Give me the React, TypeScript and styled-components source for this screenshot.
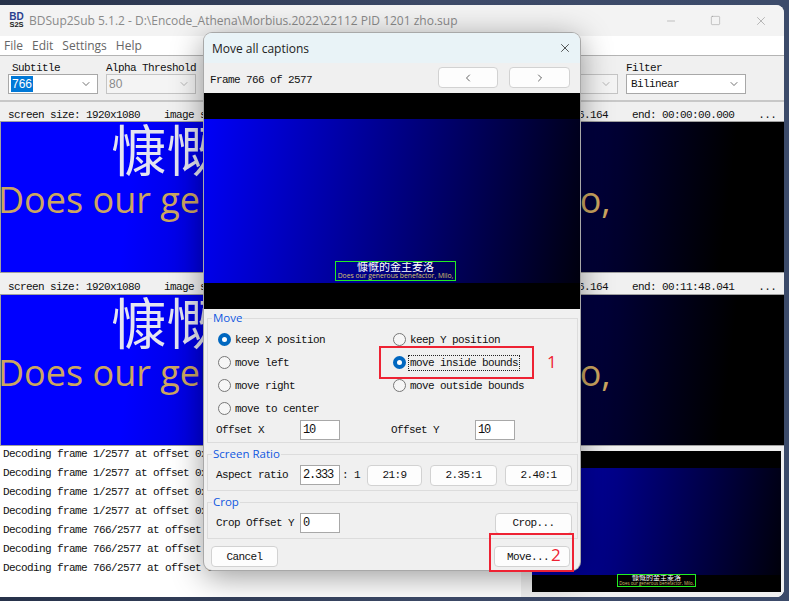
import React from "react";
import styled, { createGlobalStyle } from "styled-components";
import { ChevronDown, ChevronLeft, ChevronRight, X, Minus, Square } from "lucide-react";

const Global = createGlobalStyle`
  html, body { margin: 0; padding: 0; width: 789px; height: 601px; overflow: hidden; }
  * { box-sizing: border-box; }
`;

const MONO = `"Liberation Mono", monospace`;
const UI = `"Open Sans", "Noto Sans", sans-serif`;

const Desktop = styled.div`
  position: relative;
  width: 789px;
  height: 601px;
  padding: 5px 5px 4px 0;
  display: flex;
  background: linear-gradient(90deg, #27324a 0%, #3d4a68 55%, #3c4b6a 100%);
`;
const MainWindow = styled.div`
  flex: 1;
  display: flex;
  flex-direction: column;
  background: #f0f0f0;
  border-radius: 0 8px 8px 0;
  overflow: hidden;
`;
const TitleBar = styled.div`
  height: 31px;
  display: flex;
  align-items: center;
  padding: 0 0 0 8px;
  background: #f3f3f3;
  color: #8a8a8a;
  font: 12px ${UI};
`;
const AppLogo = styled.div`
  width: 17px;
  margin-right: 4px;
  display: flex;
  flex-direction: column;
  align-items: center;
  font: bold 10px/8px "Liberation Sans", sans-serif;
  color: #2b3f8f;
`;
const LogoLow = styled.span`
  color: #222;
  font-size: 7.5px;
`;
const TitleText = styled.span`
  flex: 1;
  white-space: nowrap;
`;
const WindowControls = styled.div`
  display: flex;
  align-items: center;
  color: #8a8a8a;
  padding-right: 16px;
  gap: 33px;
`;
const MenuBar = styled.div`
  height: 19px;
  display: flex;
  align-items: center;
  gap: 9px;
  padding-left: 4px;
  background: #fff;
  color: #666;
  font: 12px ${UI};
`;
const Toolbar = styled.div`
  height: 47px;
  display: flex;
  gap: 8px;
  padding: 6px 0 0 8px;
  background: #f0f0f0;
  border-top: 1px solid #b4b4b4;
  border-bottom: 2px solid #c8c8c8;
`;
const Field = styled.div<{ $w: number }>`
  width: ${(p) => p.$w}px;
  display: flex;
  flex-direction: column;
`;
const Caption = styled.div<{ $indent?: number }>`
  height: 12px;
  padding-left: ${(p) => p.$indent ?? 0}px;
  font: 11px/12px ${MONO};
  letter-spacing: -0.6px;
  color: #111;
  white-space: nowrap;
`;
const Combo = styled.div<{ $off?: boolean }>`
  height: 20px;
  display: flex;
  align-items: center;
  justify-content: space-between;
  padding: 0 5px 0 2px;
  background: ${(p) => (p.$off ? "#f4f4f4" : "#fff")};
  border: 1px solid ${(p) => (p.$off ? "#c4c4c4" : "#a8a8a8")};
  color: ${(p) => (p.$off ? "#8a8a8a" : "#111")};
  font: 12px "Liberation Sans", sans-serif;
`;
const Selected = styled.span`
  background: #0078d7;
  color: #fff;
  padding: 0 1px;
  line-height: 16px;
`;
const ComboMono = styled.span`
  font: 11px ${MONO};
  letter-spacing: -0.6px;
  padding-left: 2px;
`;
const InfoRow = styled.div<{ $h: number; $lh: number }>`
  height: ${(p) => p.$h}px;
  padding: 0 0 0 8px;
  display: flex;
  align-items: flex-end;
  font-family: ${MONO};
  font-size: 11px;
  line-height: ${(p) => p.$lh}px;
  letter-spacing: -0.6px;
  color: #111;
  white-space: pre;
  overflow: hidden;
`;
const Picture = styled.div`
  height: 152px;
  border: 1px solid #a0a0a0;
  border-right: 0;
  overflow: hidden;
  background: linear-gradient(97deg, #0000ff 0%, #0000ff 17%, #000000 92%);
`;
const BigCaption = styled.div`
  width: 606px;
  text-align: center;
  white-space: nowrap;
`;
const BigZh = styled.div`
  font: 55px/50px "Noto Sans CJK SC", sans-serif;
  color: #e4e4f0;
`;
const BigEn = styled.div`
  font: 36px/46px ${UI};
  color: #cca660;
  margin: 5px 3px 0 -3px;
`;
const BottomArea = styled.div`
  flex: 1;
  display: flex;
  background: #fff;
  min-height: 0;
`;
const Log = styled.div`
  width: 521px;
  padding: 0 0 0 3px;
  font: 11px/19px ${MONO};
  letter-spacing: -0.6px;
  color: #111;
  white-space: pre;
  overflow: hidden;
`;
const LogLine = styled.div`
  position: relative;
  top: -1px;
`;
const Splitter = styled.div`
  width: 11px;
  background: #f0f0f0;
`;
const SidePanel = styled.div`
  flex: 1;
  padding: 5px 3px 5px 0;
  background: #f0f0f0;
  display: flex;
`;
const Frame = styled.div<{ $band: number }>`
  flex: 1;
  display: flex;
  flex-direction: column;
  position: relative;
  background: #000;
  padding: ${(p) => p.$band}px 0;
`;
const Gradient = styled.div<{ $from: string }>`
  flex: 1;
  background: linear-gradient(100deg, ${(p) => p.$from} 0%, #000 106%);
`;
const SubBox = styled.div<{ $l: number; $t: number; $w: number; $h: number }>`
  position: absolute;
  left: ${(p) => p.$l}px;
  top: ${(p) => p.$t}px;
  width: ${(p) => p.$w}px;
  height: ${(p) => p.$h}px;
  border: 1px solid #22ee22;
  display: flex;
  flex-direction: column;
  align-items: center;
  justify-content: flex-end;
  white-space: nowrap;
  overflow: hidden;
`;
const SubZh = styled.div<{ $s: number }>`
  font: ${(p) => p.$s}px/${(p) => p.$s + 1}px "Noto Sans CJK SC", sans-serif;
  color: #fff;
`;
const SubEn = styled.div<{ $s: number }>`
  font: ${(p) => p.$s}px/${(p) => p.$s + 1}px ${UI};
  color: #d8c070;
`;
const Dialog = styled.div`
  position: absolute;
  left: 204px;
  top: 33px;
  width: 376px;
  height: 537px;
  display: flex;
  flex-direction: column;
  background: #f0f0f0;
  border-radius: 8px;
  overflow: hidden;
  box-shadow: 0 0 0 1px #a8a8a8, 0 6px 32px rgba(0, 0, 0, 0.42);
`;
const DialogTitle = styled.div`
  height: 30px;
  flex: none;
  display: flex;
  align-items: center;
  justify-content: space-between;
  padding: 0 8px;
  background: #e9f3f7;
  color: #222;
  font: 12px ${UI};
`;
const FrameRow = styled.div`
  height: 30px;
  flex: none;
  display: flex;
  align-items: flex-start;
  padding: 4px 10px 0 6px;
`;
const FrameLabel = styled.span`
  flex: 1;
  padding-top: 7px;
  font: 11px/12px ${MONO};
  letter-spacing: -0.6px;
  color: #111;
`;
const Button = styled.button<{ $w: number; $ml?: number; $pr?: number }>`
  width: ${(p) => p.$w}px;
  height: 21px;
  margin-left: ${(p) => p.$ml ?? 0}px;
  padding: 0 ${(p) => p.$pr ?? 0}px 0 0;
  display: inline-flex;
  align-items: center;
  justify-content: center;
  flex: none;
  background: #fdfdfd;
  border: 1px solid #d2d2d2;
  border-radius: 4px;
  font: 11px ${MONO};
  letter-spacing: -0.6px;
  color: #111;
`;
const DialogPreview = styled.div`
  height: 216px;
  flex: none;
  display: flex;
`;
const Body = styled.div`
  flex: 1;
  display: flex;
  flex-direction: column;
  padding: 9px 2px 0 3px;
`;
const Group = styled.div<{ $h: number; $mt?: number; $pt: number }>`
  position: relative;
  flex: none;
  height: ${(p) => p.$h}px;
  margin-top: ${(p) => p.$mt ?? 0}px;
  padding: ${(p) => p.$pt}px 0 0 8px;
  border: 1px solid #dcdcdc;
`;
const Legend = styled.span`
  position: absolute;
  left: 4px;
  top: -9px;
  padding: 0 1px;
  background: #f0f0f0;
  color: #1158e0;
  font: 11.5px/16px ${UI};
`;
const RadioGrid = styled.div`
  display: grid;
  grid-template-columns: 175px 1fr;
  grid-auto-rows: 23px;
  padding-left: 2px;
`;
const RadioRow = styled.div`
  display: flex;
  align-items: center;
  gap: 4px;
  font: 11px ${MONO};
  letter-spacing: -0.6px;
  color: #111;
`;
const RadioDot = styled.span<{ $on?: boolean }>`
  width: 13px;
  height: 13px;
  flex: none;
  border-radius: 50%;
  background: ${(p) => (p.$on ? "#fff" : "#f6f6f6")};
  border: ${(p) => (p.$on ? "4px solid #0067c0" : "1px solid #777")};
`;
const Focused = styled.span`
  outline: 1px dotted #222;
  outline-offset: 1px;
`;
const FormRow = styled.div`
  display: flex;
  align-items: center;
  height: 20px;
  font: 11px ${MONO};
  letter-spacing: -0.6px;
  color: #111;
`;
const FormLabel = styled.span<{ $ml?: number }>`
  width: 84px;
  flex: none;
  margin-left: ${(p) => p.$ml ?? 0}px;
`;
const TextBox = styled.div`
  width: 40px;
  height: 20px;
  flex: none;
  padding-left: 2px;
  background: #fff;
  border: 1px solid #a8a8a8;
  font: 12px/18px ${MONO};
  letter-spacing: -1.2px;
  color: #111;
`;
const Ratio = styled.span`
  width: 27px;
  flex: none;
  padding-left: 2px;
`;
const Footer = styled.div`
  display: flex;
  justify-content: space-between;
  padding: 7px 8px 0 4px;
`;
const RedBox = styled.div<{ $l: number; $t: number; $w: number; $h: number }>`
  position: absolute;
  left: ${(p) => p.$l}px;
  top: ${(p) => p.$t}px;
  width: ${(p) => p.$w}px;
  height: ${(p) => p.$h}px;
  border: 2px solid #ee2233;
  pointer-events: none;
`;
const RedNumber = styled.span<{ $l: number; $t: number }>`
  position: absolute;
  left: ${(p) => p.$l}px;
  top: ${(p) => p.$t}px;
  color: #ee2233;
  font: 17px/20px ${UI};
`;

const row1 = "screen size: 1920x1080    image size: 1920x132     pos: 0,900     start: 00:00:00.000  ".padEnd(94, " ") + "46.164    end: 00:00:00.000    ...";
const row2 = "screen size: 1920x1080    image size: 1920x132     pos: 0,900     start: 00:00:00.000  ".padEnd(94, " ") + "46.164    end: 00:11:48.041    ...";
const ZH_TEXT = "慷慨的金主麦洛";
const EN_TEXT = "Does our generous benefactor, Milo,";

const log = [
  "Decoding frame 1/2577 at offset 0x00000000",
  "Decoding frame 1/2577 at offset 0x00000000",
  "Decoding frame 1/2577 at offset 0x00000000",
  "Decoding frame 1/2577 at offset 0x00000000",
  "Decoding frame 766/2577 at offset 0x0025b000",
  "Decoding frame 766/2577 at offset 0x0025b000",
  "Decoding frame 766/2577 at offset 0x0025b000",
];

const radios: [string, boolean, boolean][] = [
  ["keep X position", true, false],
  ["keep Y position", false, false],
  ["move left", false, false],
  ["move inside bounds", true, true],
  ["move right", false, false],
  ["move outside bounds", false, false],
  ["move to center", false, false],
];

export default function App() {
  return (
    <Desktop>
      <Global />
      <MainWindow>
        <TitleBar>
          <AppLogo>
            BD
            <LogoLow>S2S</LogoLow>
          </AppLogo>
          <TitleText>BDSup2Sub 5.1.2 - D:\Encode_Athena\Morbius.2022\22112 PID 1201 zho.sup</TitleText>
          <WindowControls>
            <Minus size={12} strokeWidth={1} />
            <Square size={11} strokeWidth={1} />
            <X size={14} strokeWidth={1} />
          </WindowControls>
        </TitleBar>
        <MenuBar>
          <span>File</span>
          <span>Edit</span>
          <span>Settings</span>
          <span>Help</span>
        </MenuBar>
        <Toolbar>
          <Field $w={90}>
            <Caption $indent={4}>Subtitle</Caption>
            <Combo>
              <Selected>766</Selected>
              <ChevronDown size={12} strokeWidth={1.2} />
            </Combo>
          </Field>
          <Field $w={90}>
            <Caption>Alpha Threshold</Caption>
            <Combo $off>
              <span>80</span>
              <ChevronDown size={12} strokeWidth={1.2} />
            </Combo>
          </Field>
          <Field $w={90}>
            <Caption>Med Threshold</Caption>
            <Combo $off>
              <span>210</span>
              <ChevronDown size={12} strokeWidth={1.2} />
            </Combo>
          </Field>
          <Field $w={90}>
            <Caption>Low Threshold</Caption>
            <Combo $off>
              <span>160</span>
              <ChevronDown size={12} strokeWidth={1.2} />
            </Combo>
          </Field>
          <Field $w={218}>
            <Caption>Output Format</Caption>
            <Combo $off>
              <span>SUP(BD)</span>
              <ChevronDown size={12} strokeWidth={1.2} />
            </Combo>
          </Field>
          <Field $w={120}>
            <Caption>Filter</Caption>
            <Combo>
              <ComboMono>Bilinear</ComboMono>
              <ChevronDown size={12} strokeWidth={1.2} />
            </Combo>
          </Field>
        </Toolbar>
        <InfoRow $h={19} $lh={12}>{row1}</InfoRow>
        <Picture>
          <BigCaption>
            <BigZh>{ZH_TEXT}</BigZh>
            <BigEn>{EN_TEXT}</BigEn>
          </BigCaption>
        </Picture>
        <InfoRow $h={21} $lh={14}>{row2}</InfoRow>
        <Picture>
          <BigCaption>
            <BigZh>{ZH_TEXT}</BigZh>
            <BigEn>{EN_TEXT}</BigEn>
          </BigCaption>
        </Picture>
        <BottomArea>
          <Log>
            {log.map((l, i) => (
              <LogLine key={i}>{l}</LogLine>
            ))}
          </Log>
          <Splitter />
          <SidePanel>
            <Frame $band={17}>
              <Gradient $from="#0000c0" />
              <SubBox $l={85} $t={123} $w={79} $h={13}>
                <SubZh $s={7}>{ZH_TEXT}</SubZh>
                <SubEn $s={4.4}>{EN_TEXT}</SubEn>
              </SubBox>
            </Frame>
          </SidePanel>
        </BottomArea>
      </MainWindow>

      <Dialog>
        <DialogTitle>
          <span>Move all captions</span>
          <X size={14} strokeWidth={1.3} />
        </DialogTitle>
        <FrameRow>
          <FrameLabel>Frame 766 of 2577</FrameLabel>
          <Button $w={60}>
            <ChevronLeft size={12} strokeWidth={1.3} />
          </Button>
          <Button $w={61} $ml={11}>
            <ChevronRight size={12} strokeWidth={1.3} />
          </Button>
        </FrameRow>
        <DialogPreview>
          <Frame $band={26}>
            <Gradient $from="#0000f8" />
            <SubBox $l={131} $t={168} $w={121} $h={20}>
              <SubZh $s={11}>{ZH_TEXT}</SubZh>
              <SubEn $s={6.8}>{EN_TEXT}</SubEn>
            </SubBox>
          </Frame>
        </DialogPreview>
        <Body>
          <Group $h={125} $pt={9}>
            <Legend>Move</Legend>
            <RadioGrid>
              {radios.map(([label, on, focus]) => (
                <RadioRow key={label}>
                  <RadioDot $on={on} />
                  {focus ? <Focused>{label}</Focused> : <span>{label}</span>}
                </RadioRow>
              ))}
            </RadioGrid>
            <FormRow>
              <FormLabel>Offset X</FormLabel>
              <TextBox>10</TextBox>
              <FormLabel $ml={51}>Offset Y</FormLabel>
              <TextBox>10</TextBox>
            </FormRow>
          </Group>
          <Group $h={37} $mt={11} $pt={10}>
            <Legend>Screen Ratio</Legend>
            <FormRow>
              <FormLabel>Aspect ratio</FormLabel>
              <TextBox>2.333</TextBox>
              <Ratio>: 1</Ratio>
              <Button $w={55}>21:9</Button>
              <Button $w={67} $ml={8}>2.35:1</Button>
              <Button $w={67} $ml={8}>2.40:1</Button>
            </FormRow>
          </Group>
          <Group $h={37} $mt={11} $pt={10}>
            <Legend>Crop</Legend>
            <FormRow>
              <FormLabel>Crop Offset Y</FormLabel>
              <TextBox>0</TextBox>
              <Button $w={77} $ml={155}>Crop...</Button>
            </FormRow>
          </Group>
          <Footer>
            <Button $w={67}>Cancel</Button>
            <Button $w={76} $pr={8}>Move...</Button>
          </Footer>
        </Body>
      </Dialog>

      <RedBox $l={379} $t={346} $w={155} $h={33} />
      <RedNumber $l={547} $t={352}>1</RedNumber>
      <RedBox $l={489} $t={533} $w={85} $h={39} />
      <RedNumber $l={551} $t={545}>2</RedNumber>
    </Desktop>
  );
}
